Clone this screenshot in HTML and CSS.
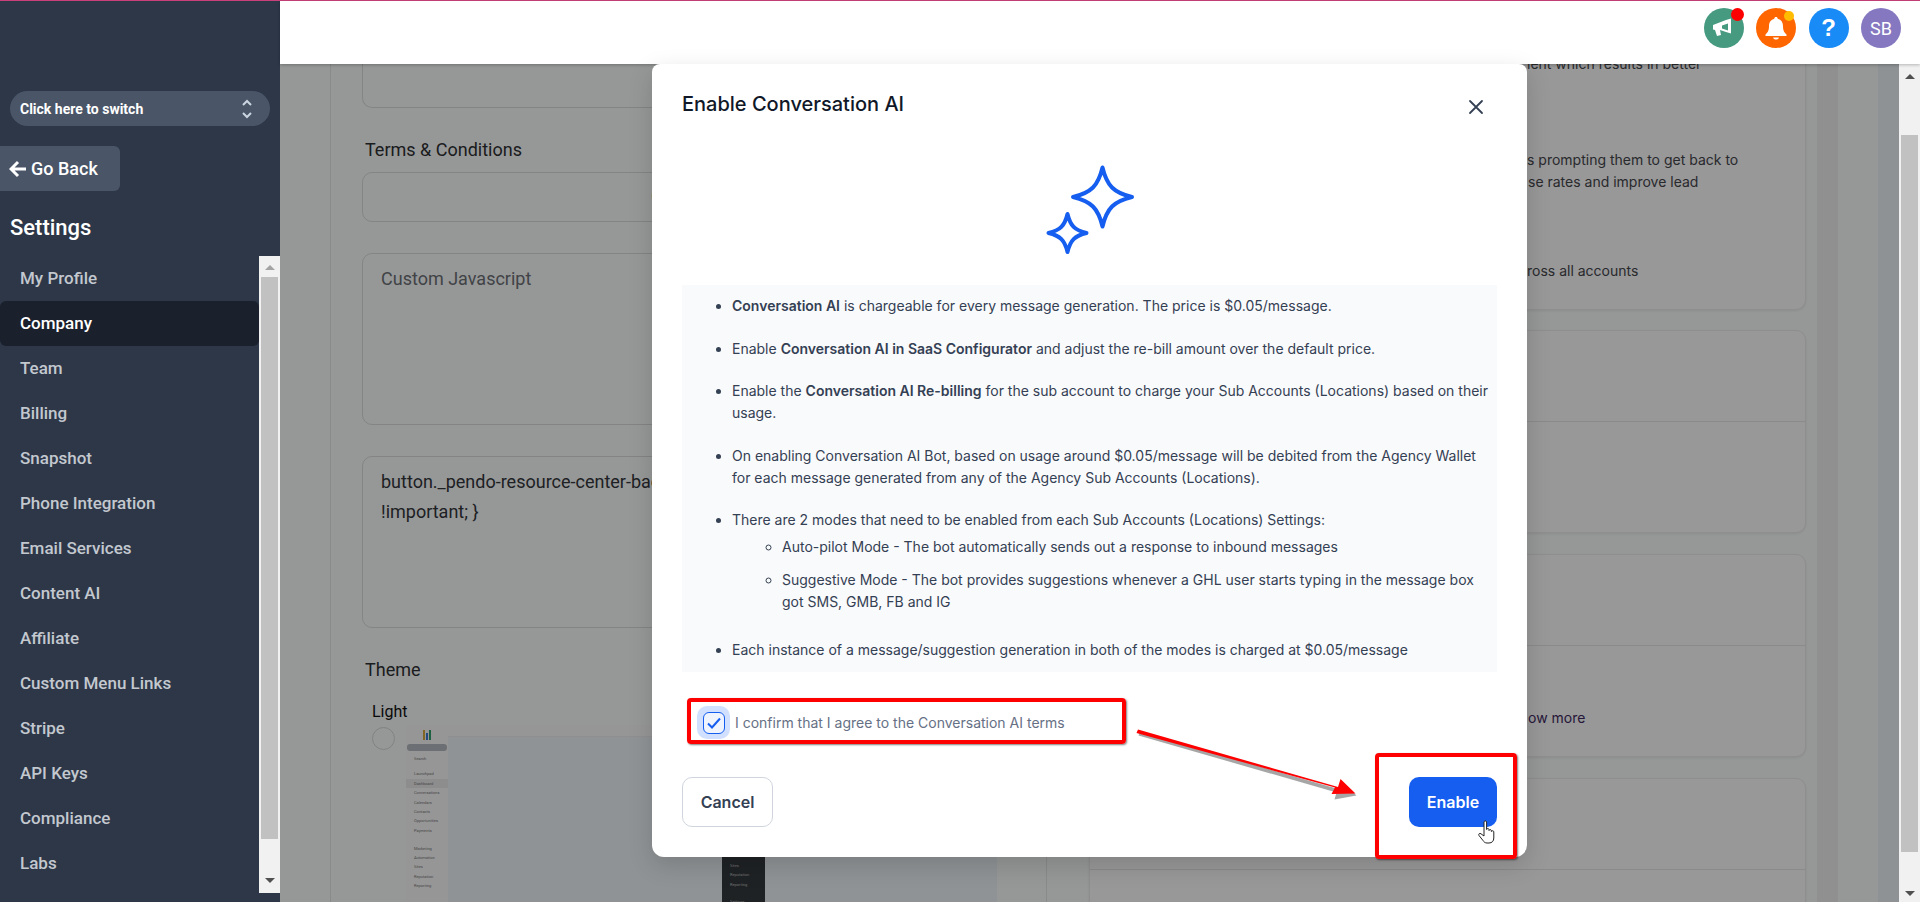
FILE: index.html
```html
<!DOCTYPE html>
<html lang="en">
<head>
    <meta charset="UTF-8">
    <meta name="viewport" content="width=device-width, initial-scale=1.0">
    <title>Company Settings</title>
    <link rel="stylesheet" href="styles.css">
</head>
<body>
    <div class="top-line"></div>

    <div class="app">
        <!-- Sidebar -->
        <aside class="sidebar">
            <div class="switcher">
                <span>Click here to switch</span>
                <svg class="switcher-arrows" width="12" height="22" viewBox="0 0 12 22">
                    <path d="M2 7l4-4 4 4M2 15l4 4 4-4" fill="none" stroke="#cbd5e0" stroke-width="2"/>
                </svg>
            </div>
            <a class="go-back">
                <svg width="18" height="18" viewBox="0 0 18 18">
                    <path d="M9 2L2 9l7 7M2.5 9H17" fill="none" stroke="#fff" stroke-width="3"/>
                </svg>
                Go Back
            </a>
            <h2 class="sidebar-title">Settings</h2>
            <div class="nav-wrap">
                <nav class="nav-list">
                    <a class="nav-item">My Profile</a>
                    <a class="nav-item active">Company</a>
                    <a class="nav-item">Team</a>
                    <a class="nav-item">Billing</a>
                    <a class="nav-item">Snapshot</a>
                    <a class="nav-item">Phone Integration</a>
                    <a class="nav-item">Email Services</a>
                    <a class="nav-item">Content AI</a>
                    <a class="nav-item">Affiliate</a>
                    <a class="nav-item">Custom Menu Links</a>
                    <a class="nav-item">Stripe</a>
                    <a class="nav-item">API Keys</a>
                    <a class="nav-item">Compliance</a>
                    <a class="nav-item">Labs</a>
                </nav>
                <div class="scrollbar nav-scrollbar">
                    <div class="scroll-end"><i class="arrow-up muted"></i></div>
                    <div class="scroll-thumb"></div>
                    <div class="scroll-end"><i class="arrow-down"></i></div>
                </div>
            </div>
        </aside>

        <div class="main">
            <!-- Header -->
            <header class="topbar">
                <div class="avatar avatar-green">
                    <svg width="24" height="20" viewBox="0 0 24 20">
                        <path d="M1 7l13-5 5-1.500v15l-5-1.500-6-2 1 5-4 1-2-6-2-.5z" fill="#fff"/>
                        <path d="M10 7.500l6-2v7l-6-2z" fill="#469a80"/>
                    </svg>
                    <span class="dot dot-red"></span>
                </div>
                <div class="avatar avatar-orange">
                    <svg width="22" height="24" viewBox="0 0 22 24">
                        <path d="M11 1c1 0 1.700.7 1.700 1.700C16 3.500 18 6.200 18 10c0 5 1.500 6.500 3.500 8.500V20H.5v-1.500C2.500 16.500 4 15 4 10c0-3.800 2-6.500 5.300-7.300C9.300 1.700 10 1 11 1z" fill="#fff"/>
                        <path d="M8 21.500h6c-.5 1.500-1.500 2-3 2s-2.500-.5-3-2z" fill="#fff"/>
                    </svg>
                    <span class="dot dot-yellow"></span>
                </div>
                <div class="avatar avatar-blue">?</div>
                <div class="avatar avatar-purple">SB</div>
            </header>

            <div class="content-row">
                <div class="content">
                    <!-- Left column of the company form -->
                    <section class="form-panel">
                        <div class="field field-cut"></div>
                        <label class="field-label label-terms">Terms &amp; Conditions</label>
                        <div class="field field-short"><span class="field-mark">(</span></div>
                        <div class="field field-tall field-placeholder">Custom Javascript</div>
                        <div class="field field-tall field-code">button._pendo-resource-center-badge-notification-bubble { display: none<br>!important; }</div>
                        <label class="field-label label-theme">Theme</label>
                        <div class="theme-title">Light</div>
                        <div class="theme-row">
                            <span class="radio"></span>
                            <div class="theme-thumb">
                                <div class="thumb-side">
                                    <svg class="thumb-logo" width="10" height="12" viewBox="0 0 10 12">
                                        <path d="M2 1v10" stroke="#d8a93a" stroke-width="2"/>
                                        <path d="M5 4v7" stroke="#3a7bd5" stroke-width="2"/>
                                        <path d="M8 1v10" stroke="#35a06b" stroke-width="2"/>
                                    </svg>
                                    <div class="thumb-pill"></div>
                                    <div class="thumb-link thumb-search">Search</div>
                                    <div class="thumb-link">Launchpad</div>
                                    <div class="thumb-link thumb-on">Dashboard</div>
                                    <div class="thumb-link">Conversations</div>
                                    <div class="thumb-link">Calendars</div>
                                    <div class="thumb-link">Contacts</div>
                                    <div class="thumb-link">Opportunities</div>
                                    <div class="thumb-link thumb-sep">Payments</div>
                                    <div class="thumb-link">Marketing</div>
                                    <div class="thumb-link">Automation</div>
                                    <div class="thumb-link">Sites</div>
                                    <div class="thumb-link">Reputation</div>
                                    <div class="thumb-link thumb-gap">Reporting</div>
                                    <div class="thumb-link">Settings</div>
                                </div>
                                <div class="thumb-main">
                                    <div class="thumb-bar"></div>
                                </div>
                            </div>
                            <div class="theme-thumb theme-dark">
                                <div class="thumb-side">
                                    <div class="thumb-link">Sites</div>
                                    <div class="thumb-link">Reputation</div>
                                    <div class="thumb-link thumb-gap">Reporting</div>
                                    <div class="thumb-link">Settings</div>
                                </div>
                                <div class="thumb-main"></div>
                            </div>
                        </div>
                    </section>

                    <!-- Right column of feature cards -->
                    <section class="cards">
                        <div class="card card-first">
                            <p class="card-text text-cut">ient which results in better</p>
                            <p class="card-text text-prompt">s prompting them to get back to<br><span class="text-indent">se rates and improve lead</span></p>
                            <p class="card-text text-across">ross all accounts</p>
                        </div>
                        <div class="card">
                            <div class="card-head"></div>
                            <div class="card-body"></div>
                        </div>
                        <div class="card">
                            <div class="card-head"></div>
                            <div class="card-body"><a class="show-more">ow more</a></div>
                        </div>
                        <div class="card">
                            <div class="card-head"></div>
                            <div class="card-body"></div>
                        </div>
                    </section>

                    <div class="band band-grey"></div>
                    <div class="band band-light"></div>
                    <div class="band band-blue"></div>
                </div>
                <div class="scrollbar page-scrollbar">
                    <div class="scroll-end"><i class="arrow-up"></i></div>
                    <div class="scroll-thumb"></div>
                    <div class="scroll-end"><i class="arrow-down"></i></div>
                </div>
            </div>

            <div class="backdrop"></div>
        </div>
    </div>

    <!-- Modal -->
    <div class="modal">
        <div class="modal-head">
            <h3>Enable Conversation AI</h3>
            <svg class="modal-close" width="16" height="16" viewBox="0 0 16 16">
                <path d="M2 2l12 12M14 2L2 14" stroke="#344054" stroke-width="1.800" stroke-linecap="round"/>
            </svg>
        </div>
        <svg class="sparkles" width="90" height="90" viewBox="0 0 90 90">
            <path d="M57.500 2.500C61.900 20.800 68.700 27.600 87 32C68.700 36.400 61.900 43.200 57.500 61.500C53.100 43.200 46.300 36.400 28 32C46.300 27.600 53.100 20.800 57.500 2.500Z" fill="none" stroke="#155eef" stroke-width="4" stroke-linejoin="round"/>
            <path d="M22.500 49C25.350 60.800 29.700 65.150 41.500 68C29.700 70.850 25.350 75.200 22.500 87C19.650 75.200 15.300 70.850 3.500 68C15.300 65.150 19.650 60.800 22.500 49Z" fill="none" stroke="#155eef" stroke-width="4" stroke-linejoin="round"/>
        </svg>
        <div class="terms-box">
            <ul class="terms-list">
                <li><b>Conversation AI</b> is chargeable for every message generation. The price is $0.05/message.</li>
                <li>Enable <b>Conversation AI in SaaS Configurator</b> and adjust the re-bill amount over the default price.</li>
                <li>Enable the <b>Conversation AI Re-billing</b> for the sub account to charge your Sub Accounts (Locations) based on their usage.</li>
                <li>On enabling Conversation AI Bot, based on usage around $0.05/message will be debited from the Agency Wallet for each message generated from any of the Agency Sub Accounts (Locations).</li>
                <li>There are 2 modes that need to be enabled from each Sub Accounts (Locations) Settings:
                    <ul class="sub-list">
                        <li>Auto-pilot Mode - The bot automatically sends out a response to inbound messages</li>
                        <li>Suggestive Mode - The bot provides suggestions whenever a GHL user starts typing in the message box got SMS, GMB, FB and IG</li>
                    </ul>
                </li>
                <li>Each instance of a message/suggestion generation in both of the modes is charged at $0.05/message</li>
            </ul>
        </div>
        <label class="confirm-row">
            <span class="check-halo">
                <span class="check-box">
                    <svg width="20" height="20" viewBox="0 0 20 20">
                        <path d="M4 10.500l4 4 8-9" fill="none" stroke="#155eef" stroke-width="2"/>
                    </svg>
                </span>
            </span>
            I confirm that I agree to the Conversation AI terms
        </label>
        <div class="modal-actions">
            <button class="btn btn-cancel">Cancel</button>
            <button class="btn btn-enable">Enable</button>
        </div>
    </div>

    <!-- Red annotations drawn on top of the screenshot -->
    <div class="mark mark-confirm"></div>
    <div class="mark mark-enable"></div>
    <svg class="mark-arrow" width="230" height="80" viewBox="0 0 230 80">
        <path d="M3 2.500L203 60l2.500-8 14 14-22 4 2-7L1.500 6z" fill="#000" opacity=".35" transform="translate(1 1.500)"/>
        <path d="M2 1.500L202 59l2.500-8 15 14.500-24 .5 3.500-6.500L.5 5z" fill="#f00"/>
    </svg>
    <svg class="hand-cursor" width="18" height="24" viewBox="0 0 18 24">
        <path d="M6 2C6 .6 8.600 .6 8.600 2V9.500C8.600 8.300 11 8.300 11 9.500V10.500C11 9.400 13.400 9.400 13.400 10.500V11.500C13.400 10.500 15.800 10.500 15.800 11.800V18C15.800 21 14 23 11 23H9C7 23 6 22 5 20.500L1 15.500C0 14 1.800 12.800 3 13.800L6 16Z" fill="#fff" stroke="#222" stroke-width="1"/>
    </svg>
</body>
</html>
```

FILE: styles.css
```css
* {
    box-sizing: border-box;
}

html,
body {
    height: 100%;
}

body {
    margin: 0;
    overflow: hidden;
    font-family: 'Roboto', sans-serif;
    background: #2d3748;
}

.top-line {
    height: 1px;
    background: #c9407b;
}

.app {
    display: flex;
    height: 901px;
}

/* Sidebar */
.sidebar {
    width: 280px;
    flex-shrink: 0;
    display: flex;
    flex-direction: column;
    background: #2d3748;
    color: #fff;
    padding-top: 90px;
}

.switcher {
    display: flex;
    align-items: center;
    justify-content: space-between;
    width: 260px;
    height: 35px;
    margin-left: 10px;
    padding: 0 17px 0 10px;
    border-radius: 18px;
    background: #4a5568;
    font-size: 14px;
    font-weight: 700;
}

.go-back {
    display: flex;
    align-items: center;
    gap: 4px;
    width: 120px;
    height: 45px;
    margin-top: 20px;
    padding-left: 9px;
    border-radius: 0 6px 6px 0;
    background: #4a5568;
    font-size: 18px;
    font-weight: 500;
}

.sidebar-title {
    height: 65px;
    margin: 0;
    padding: 21px 0 0 10px;
    font-size: 22px;
    line-height: 32px;
    font-weight: 500;
}

.nav-wrap {
    display: flex;
    height: 637px;
}

.nav-list {
    flex: 1;
}

.nav-item {
    display: block;
    height: 45px;
    padding-left: 20px;
    border-radius: 6px;
    color: #c3c8cf;
    font-size: 17px;
    font-weight: 500;
    line-height: 45px;
}

.nav-item.active {
    background: #1a202c;
    color: #fff;
}

/* Hand drawn scrollbars */
.scrollbar {
    width: 21px;
    flex-shrink: 0;
    display: flex;
    flex-direction: column;
    background: #f1f1f1;
}

.scroll-end {
    display: flex;
    justify-content: center;
}

.scroll-thumb {
    flex: 1;
    margin: 0 2px;
    background: #c1c1c1;
}

.arrow-up,
.arrow-down {
    width: 0;
    height: 0;
    border-left: 5px solid transparent;
    border-right: 5px solid transparent;
}

.arrow-up {
    border-bottom: 5px solid #505050;
}

.arrow-up.muted {
    border-bottom-color: #a3a3a3;
}

.arrow-down {
    border-top: 5px solid #505050;
}

.nav-scrollbar .scroll-thumb {
    margin-right: 2px;
}

.nav-scrollbar .scroll-end:first-child {
    height: 21px;
    padding-top: 9px;
}

.nav-scrollbar .scroll-end:last-child {
    height: 54px;
    padding-top: 39px;
}

.page-scrollbar .scroll-end:first-child {
    height: 71px;
    padding-top: 10px;
}

.page-scrollbar .scroll-end:last-child {
    height: 50px;
    padding-top: 39px;
}

.page-scrollbar .scroll-thumb {
    margin: 0 2px 0 2px;
}

/* Main area */
.main {
    flex: 1;
    min-width: 0;
    display: flex;
    flex-direction: column;
    position: relative;
}

.topbar {
    position: relative;
    z-index: 3;
    display: flex;
    justify-content: flex-end;
    align-items: flex-start;
    gap: 12.500px;
    height: 63px;
    padding: 7px 19px 0 0;
    background: #fff;
    box-shadow: 0 1px 3px rgba(0, 0, 0, 0.25);
}

.avatar {
    position: relative;
    display: flex;
    align-items: center;
    justify-content: center;
    width: 40px;
    height: 40px;
    border-radius: 50%;
    color: #fff;
}

.avatar-green {
    background: #469a80;
}

.avatar-orange {
    background: #ff6600;
}

.avatar-blue {
    background: #188bf6;
    font-family: 'Liberation Sans', sans-serif;
    font-size: 24px;
    font-weight: 700;
}

.avatar-purple {
    background: #8578c0;
    font-size: 18px;
}

.dot {
    position: absolute;
    border-radius: 50%;
}

.dot-red {
    top: 0;
    right: 0;
    width: 13px;
    height: 13px;
    background: #f00;
}

.dot-yellow {
    top: 3px;
    right: 2px;
    width: 10px;
    height: 10px;
    background: #ffbc00;
}

.content-row {
    flex: 1;
    min-height: 0;
    display: flex;
}

.content {
    flex: 1;
    min-width: 0;
    display: flex;
    padding-left: 50px;
    overflow: hidden;
    background: #fbfdfd;
}

/* Company form, dimmed by the backdrop */
.form-panel {
    width: 717px;
    flex-shrink: 0;
    margin-right: 42px;
    padding-left: 31px;
    border-left: 1px solid #e6e6e6;
    border-right: 1px solid #e6e6e6;
}

.field {
    width: 655px;
    border: 1px solid #dcdcdc;
    border-radius: 10px;
    color: #6d7076;
    font-size: 18px;
}

.field-cut {
    height: 44px;
    border-top: 0;
    border-radius: 0 0 10px 10px;
}

.field-label {
    display: block;
    padding-left: 3px;
    color: #2e3033;
    font-size: 18px;
    line-height: 24px;
}

.label-terms {
    margin-top: 30px;
    margin-bottom: 10px;
}

.field-short {
    height: 50px;
    padding: 11px 0 0 288px;
    color: #6b1525;
}

.field-tall {
    height: 172px;
    margin-top: 31px;
    padding: 10px 18px;
    line-height: 30px;
}

.field-code {
    color: #33363b;
}

.label-theme {
    margin-top: 30px;
}

.theme-title {
    margin-top: 18px;
    padding-left: 10px;
    color: #111;
    font-size: 16px;
    line-height: 24px;
}

.theme-row {
    display: flex;
    margin-top: 1px;
}

.radio {
    width: 23px;
    height: 23px;
    margin: 2px 11px 0 10px;
    flex-shrink: 0;
    border: 1px solid #d8d8d8;
    border-radius: 50%;
}

.theme-thumb {
    display: flex;
    width: 273px;
    height: 240px;
    flex-shrink: 0;
    background: #eef5f9;
}

.thumb-side {
    width: 42px;
    flex-shrink: 0;
    padding-top: 2px;
    background: #fbfbfb;
    text-align: center;
}

.thumb-logo {
    display: block;
    margin: 2px auto 0;
}

.thumb-pill {
    height: 7px;
    margin: 3px 1px 0;
    border-radius: 3px;
    background: #b5bac0;
}

.thumb-link {
    height: 9.400px;
    padding-left: 8px;
    color: #777;
    font-size: 4px;
    line-height: 9.400px;
    text-align: left;
}

.thumb-search {
    margin: 3px 0 6px;
}

.thumb-on {
    background: #ececec;
}

.thumb-sep {
    margin-bottom: 8.500px;
}

.thumb-gap {
    margin-bottom: 8px;
}

.thumb-main {
    flex: 1;
}

.thumb-bar {
    height: 12px;
    background: #fbfbfb;
    border-bottom: 1px solid #eee;
}

.theme-dark {
    width: 318px;
    margin-left: 0;
}

.theme-dark .thumb-side {
    width: 43px;
    margin-left: 43px;
    padding-top: 136px;
    background: #34393f;
}

.theme-dark .thumb-link {
    color: #bbb;
}

/* Feature cards */
.cards {
    width: 717px;
    flex-shrink: 0;
    margin-right: 11px;
}

.card {
    height: 203px;
    margin-bottom: 21px;
    border: 1px solid #ededed;
    border-radius: 10px;
    box-shadow: 0 1px 3px rgba(0, 0, 0, 0.08);
    background: #fdfdfd;
}

.card-first {
    height: 257px;
    margin-top: 0;
    margin-bottom: 20px;
    border-top: 0;
    border-radius: 0 0 10px 10px;
}

.card-text {
    margin: 0;
    padding-left: 437px;
    color: #45464c;
    font-family: 'Inter', sans-serif;
    font-size: 14px;
    line-height: 22px;
    white-space: nowrap;
}

.text-cut {
    margin-top: -11px;
}

.text-prompt {
    margin-top: 74px;
}

.text-indent {
    padding-left: 1px;
}

.text-across {
    margin-top: 67px;
}

.card-head {
    height: 91px;
    border-bottom: 1px solid #e6e6e6;
}

.card-body {
    height: 110px;
    padding: 61px 0 0 438px;
}

.show-more {
    color: #3f2a5f;
    font-family: 'Inter', sans-serif;
    font-size: 14px;
    line-height: 22px;
}

.band {
    flex-shrink: 0;
    height: 100%;
}

.band-grey {
    width: 21px;
    background: #f0f0f0;
}

.band-light {
    width: 40px;
    background: #fbfdfd;
}

.band-blue {
    width: 21px;
    background: #eef3f7;
}

.backdrop {
    position: absolute;
    top: 63px;
    left: 0;
    right: 21px;
    bottom: 0;
    z-index: 1;
    background: rgba(0, 0, 0, 0.4);
}

/* Modal */
.modal {
    position: absolute;
    top: 64px;
    left: 652px;
    z-index: 4;
    display: flex;
    flex-direction: column;
    width: 875px;
    height: 793px;
    padding: 25px 30px 30px;
    border-radius: 0 0 12px 12px;
    border-top-left-radius: 8px;
    border-top-right-radius: 8px;
    background: #fff;
    font-family: 'Inter', sans-serif;
    box-shadow: 0 8px 24px rgba(0, 0, 0, 0.15);
}

.modal-head {
    display: flex;
    align-items: center;
    justify-content: space-between;
    height: 30px;
    padding-right: 13px;
}

.modal-head h3 {
    margin: 0;
    color: #101828;
    font-size: 20px;
    font-weight: 500;
}

.modal-close {
    margin-top: 6px;
}

.sparkles {
    display: block;
    flex-shrink: 0;
    margin: 46px auto 0;
}

.terms-box {
    height: 387px;
    margin-top: 30px;
    padding: 10px 0;
    background: #f9fafb;
    color: #344054;
    font-size: 14px;
    line-height: 22px;
}

.terms-box b {
    font-weight: 600;
}

.terms-list {
    margin: 0;
    padding: 0 0 0 50px;
}

.terms-list > li {
    margin-bottom: 20.600px;
}

.terms-list > li:last-child {
    margin-bottom: 0;
}

.sub-list {
    margin: 5px 0 26px;
    padding-left: 50px;
    list-style: circle;
}

.sub-list li {
    margin-bottom: 11px;
}

.sub-list li:last-child {
    margin-bottom: 0;
}

.confirm-row {
    display: flex;
    align-items: center;
    gap: 5px;
    height: 33px;
    margin: 34px 0 0 15px;
    color: #667085;
    font-size: 14px;
}

.check-halo {
    display: flex;
    align-items: center;
    justify-content: center;
    width: 33px;
    height: 33px;
    border-radius: 10px;
    background: #d1e0ff;
}

.check-box {
    display: flex;
    align-items: center;
    justify-content: center;
    width: 22px;
    height: 22px;
    border: 1.500px solid #155eef;
    border-radius: 6px;
    background: #eff4ff;
}

.modal-actions {
    display: flex;
    justify-content: space-between;
    margin-top: 38px;
}

.btn {
    height: 50px;
    border-radius: 10px;
    font-family: 'Inter', sans-serif;
    font-size: 16px;
    font-weight: 600;
}

.btn-cancel {
    width: 91px;
    border: 1px solid #d0d5dd;
    background: #fff;
    color: #344054;
}

.btn-enable {
    width: 88px;
    border: 0;
    background: #155eef;
    color: #fff;
}

/* Annotations */
.mark {
    position: absolute;
    z-index: 5;
    border: 4px solid #f00;
    border-radius: 4px;
    box-shadow: 1px 1px 2px rgba(0, 0, 0, 0.5);
}

.mark-confirm {
    top: 698px;
    left: 687px;
    width: 439px;
    height: 46px;
}

.mark-enable {
    top: 753px;
    left: 1375px;
    width: 142px;
    height: 106px;
}

.mark-arrow {
    position: absolute;
    top: 728px;
    left: 1136px;
    z-index: 5;
}

.hand-cursor {
    position: absolute;
    top: 820px;
    left: 1478px;
    z-index: 6;
}
```
